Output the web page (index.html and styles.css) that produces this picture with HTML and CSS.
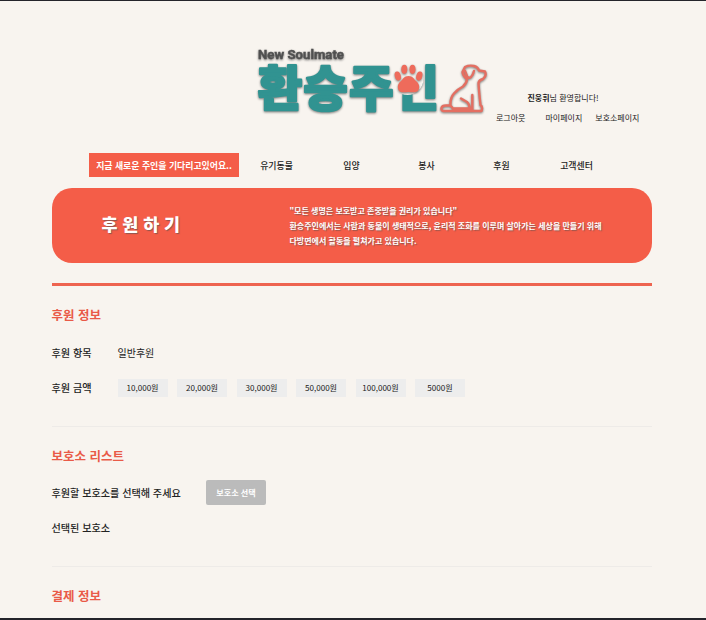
FILE: index.html
```html
<!DOCTYPE html>
<html lang="ko">
<head>
<meta charset="utf-8">
<title>환승주인</title>
<link rel="stylesheet" href="styles.css">
</head>
<body>
<div class="page">
  <header class="header">
    <svg class="logo" width="236" height="88" viewBox="254 42 236 88">
      <g class="logo-shadow">
        <text class="logo-sub" x="258" y="59" textLength="86" lengthAdjust="spacingAndGlyphs">New Soulmate</text>
        <text class="logo-name" x="258" y="106" textLength="181">환승주인</text>
      </g>
      <ellipse cx="407.500" cy="79" rx="16" ry="16" fill="#f8f4ef"/>
      <g class="logo-shadow" fill="#ee6b5b">
        <ellipse cx="397.800" cy="76" rx="3" ry="4.6" transform="rotate(-15 397.800 76)"/>
        <ellipse cx="404.300" cy="69.300" rx="3" ry="4.600"/>
        <ellipse cx="412.500" cy="69.300" rx="3" ry="4.600"/>
        <ellipse cx="419.300" cy="76" rx="3" ry="4.600" transform="rotate(15 419.300 76)"/>
        <path d="M408.500 76c4 0 5.500 3 7.500 5 3 2.500 4 5.500 2.500 9-2 3.500-6 2-10 2s-8 1.500-10-2c-1.500-3.500-.5-6.500 2.500-9 2-2 3.500-5 7.500-5z"/>
      </g>
      <path class="dog logo-shadow" d="M465 67Q469 65 474 66Q478 67 479 70.500L485 71.500Q487 76 483 79Q479 80 478.500 83Q479 92 480.500 105Q483 107 481.500 111H444Q441 111 441.500 108Q442 105.500 446 105.500H450.500Q450 98 454 93.500Q458 89 463 86.500Q467 83 467 79Q463 76 462.500 72ZM465 71L467 76Q468.500 79 471 77Q473 75 474 71M461 98.500L467 102Q469.500 104 470 110M472.300 95V110M450.500 105.500L453 108.500H470"/>
    </svg>
    <div class="account">
      <p class="welcome"><b>진웅휘</b>님 환영합니다!</p>
      <div class="links"><a>로그아웃</a><a>마이페이지</a><a>보호소페이지</a></div>
    </div>
  </header>
  <nav class="nav">
    <a class="current">지금 새로운 주인을 기다리고있어요..</a>
    <a>유기동물</a><a>입양</a><a>봉사</a><a>후원</a><a>고객센터</a>
  </nav>
  <section class="banner">
    <h1>후 원 하 기</h1>
    <p>"모든 생명은 보호받고 존중받을 권리가 있습니다"<br>환승주인에서는 사람과 동물이 생태적으로, 윤리적 조화를 이루며 살아가는 세상을 만들기 위해<br>다방면에서 활동을 펼쳐가고 있습니다.</p>
  </section>
  <main>
    <section class="block first">
      <h2>후원 정보</h2>
      <div class="row"><span class="label">후원 항목</span><span class="value">일반후원</span></div>
      <div class="row"><span class="label">후원 금액</span>
        <div class="amounts"><button>10,000원</button><button>20,000원</button><button>30,000원</button><button>50,000원</button><button>100,000원</button><button>5000원</button></div>
      </div>
    </section>
    <section class="block">
      <h2>보호소 리스트</h2>
      <div class="row"><span class="label wide">후원할 보호소를 선택해 주세요</span><button class="select">보호소 선택</button></div>
      <div class="row"><span class="label">선택된 보호소</span></div>
    </section>
    <section class="block">
      <h2>결제 정보</h2>
    </section>
  </main>
</div>
</body>
</html>
```
FILE: styles.css
```css
* { box-sizing: border-box; margin: 0; padding: 0; }
body {
  background: #f8f4ef;
  color: #222;
  font-family: "Noto Sans CJK KR", "Noto Sans", sans-serif;
}
.page {
  height: 620px;
  overflow: hidden;
  border-top: 1px solid #24242a;
  border-bottom: 2px solid #24242a;
  padding: 0 54.5px 0 51.5px;
}
.header { display: flex; height: 152px; padding: 41px 0 0 202.5px; }
.logo { flex: none; }
.logo-shadow { filter: drop-shadow(0 1px 1px rgba(60, 60, 60, .65)); }
.logo-sub { font: 700 12.5px Roboto, sans-serif; fill: #505050; stroke: #505050; stroke-width: .4px; }
.logo-name { font-size: 48px; font-weight: 900; fill: #319391; stroke: #319391; stroke-width: 2.4px; stroke-linejoin: round; }
.dog { fill: none; stroke: #e46f62; stroke-width: 2.4px; stroke-linecap: round; stroke-linejoin: round; }
.account { flex: none; width: 150px; margin-left: 5px; padding-top: 49px; font-size: 8px; line-height: 14px; white-space: nowrap; }
.welcome { padding-left: 32.5px; }
.links { display: flex; width: 145px; margin-top: 6px; padding-left: 1px; }
.links a:nth-child(2) { margin: 0 13px 0 20px; }
.nav { display: flex; align-items: center; height: 24px; padding-left: 37.5px; font-size: 8.9px; font-weight: 500; }
.nav a { width: 75px; text-align: center; }
.nav .current {
  width: 150px;
  height: 24px;
  line-height: 25px;
  background: #f45d48;
  color: #fff;
  font-size: 8.9px;
  font-weight: 700;
  white-space: nowrap;
}
.banner {
  display: flex;
  align-items: center;
  height: 75px;
  margin-top: 11px;
  border-radius: 20px;
  background: #f45d48;
  color: #fff;
  text-shadow: 1px 1px 1px rgba(80, 80, 80, .6);
}
.banner h1 { width: 238px; padding: 0 0 4px 50px; font-size: 17.4px; line-height: 24px; font-weight: 900; }
.banner p { font-size: 8px; line-height: 15px; font-weight: 700; white-space: nowrap; }
.block { height: 140px; border-top: 1px solid #eeebe8; padding-top: 16px; }
.block.first { height: 143px; margin-top: 20px; border-top: 3px solid #ee6450; padding-top: 16px; }
h2 { height: 25px; line-height: 25px; color: #e95a47; font-size: 12.5px; font-weight: 700; }
.row { display: flex; align-items: center; height: 35px; }
h2 + .row { margin-top: 7px; }
.first h2 + .row { margin-top: 8px; }
.label { width: 66px; font-size: 10.1px; font-weight: 500; white-space: nowrap; }
.label.wide { width: 154.5px; }
.value { font-size: 10px; }
.amounts { display: flex; gap: 9.5px; }
button { border: 0; font-family: inherit; white-space: nowrap; }
.amounts button { width: 50px; height: 18px; background: #ededed; color: #222; font-size: 8.1px; }
.select { width: 60px; height: 25px; border-radius: 2px; background: #bbb; color: #fff; font-size: 8.1px; font-weight: 700; }
```
